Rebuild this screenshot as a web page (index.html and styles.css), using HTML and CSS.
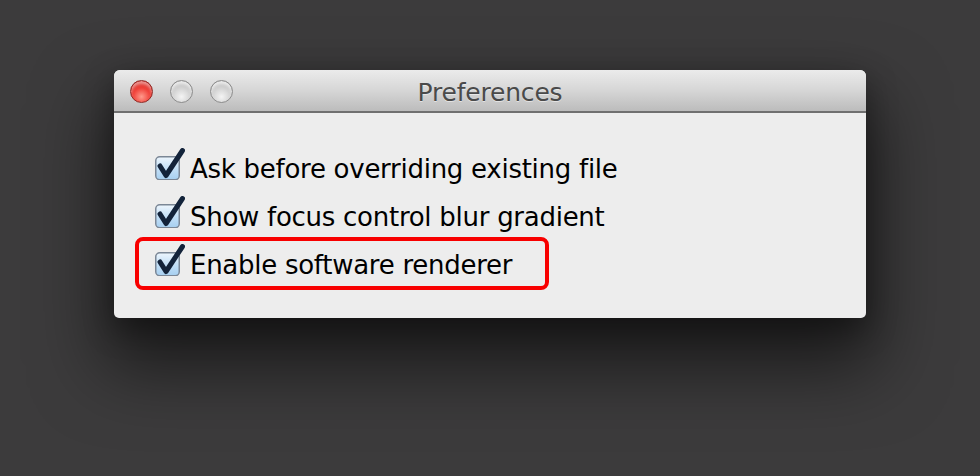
FILE: index.html
```html
<!DOCTYPE html>
<html>
<head>
<meta charset="utf-8">
<link rel="stylesheet" href="styles.css">
</head>
<body>
<div class="desk">
  <div class="window">
    <div class="titlebar">
      <div class="lights">
        <span class="light red"></span>
        <span class="light gray"></span>
        <span class="light gray"></span>
      </div>
      <div class="title">Preferences</div>
    </div>
    <div class="content">
      <div class="row">
        <svg class="cb" width="30" height="32" viewBox="0 0 30 32"><defs><linearGradient id="g1" x1="0" y1="0" x2="0" y2="1"><stop offset="0" stop-color="#eef6fd"/><stop offset="0.5" stop-color="#c4e0f7"/><stop offset="1" stop-color="#a6cff0"/></linearGradient></defs><rect x="0.75" y="8.75" width="23.5" height="23" rx="4" fill="url(#g1)" stroke="#7b8796" stroke-width="1.5"/><path d="M5 18 L11 27.5 L27.5 2.5" fill="none" stroke="#13233a" stroke-width="5" stroke-linecap="round" stroke-linejoin="round"/></svg>
        <span class="label">Ask before overriding existing file</span>
      </div>
      <div class="row">
        <svg class="cb" width="30" height="32" viewBox="0 0 30 32"><rect x="0.75" y="8.75" width="23.5" height="23" rx="4" fill="url(#g1)" stroke="#7b8796" stroke-width="1.5"/><path d="M5 18 L11 27.5 L27.5 2.5" fill="none" stroke="#13233a" stroke-width="5" stroke-linecap="round" stroke-linejoin="round"/></svg>
        <span class="label">Show focus control blur gradient</span>
      </div>
      <div class="row highlighted">
        <svg class="cb" width="30" height="32" viewBox="0 0 30 32"><rect x="0.75" y="8.75" width="23.5" height="23" rx="4" fill="url(#g1)" stroke="#7b8796" stroke-width="1.5"/><path d="M5 18 L11 27.5 L27.5 2.5" fill="none" stroke="#13233a" stroke-width="5" stroke-linecap="round" stroke-linejoin="round"/></svg>
        <span class="label">Enable software renderer</span>
        <span class="mark"></span>
      </div>
    </div>
  </div>
</div>
</body>
</html>
```
FILE: styles.css
```css
html, body {
  margin: 0;
  padding: 0;
  background: #3c3b3c;
}
.desk {
  width: 980px;
  height: 476px;
  padding: 70px 0 0 114px;
  box-sizing: border-box;
  background: #3c3b3c;
}
.window {
  width: 752px;
  height: 248px;
  border-radius: 6px 6px 5px 5px;
  overflow: hidden;
  background: #ededed;
  box-shadow: 0 40px 70px 10px rgba(0,0,0,0.55), 0 10px 30px rgba(0,0,0,0.35);
  font-family: "DejaVu Sans", sans-serif;
}
.titlebar {
  height: 41px;
  border-bottom: 2px solid #707070;
  background: linear-gradient(#ebebeb, #d6d6d6 50%, #bcbcbc);
  display: flex;
  align-items: center;
  position: relative;
}
.lights {
  display: flex;
  gap: 17px;
  padding-left: 16px;
  padding-top: 2px;
}
.light {
  width: 23px;
  height: 23px;
  border-radius: 50%;
  box-sizing: border-box;
}
.red {
  background: radial-gradient(circle at 50% 75%, #ff9a8c 0%, #f0423a 45%, #c41812 100%);
  border: 1px solid #8e2a26;
  box-shadow: inset 0 3px 3px rgba(255,255,255,0.5);
}
.gray {
  background: radial-gradient(circle at 50% 75%, #f4f4f4 0%, #d0d0d0 50%, #a9a9a9 100%);
  border: 1px solid #8c8c8c;
  box-shadow: inset 0 3px 3px rgba(255,255,255,0.7);
}
.title {
  position: absolute;
  left: 0;
  right: 0;
  top: 8px;
  text-align: center;
  font-size: 25px;
  letter-spacing: -0.2px;
  color: #4a4a4a;
  text-shadow: 0 1px 0 rgba(255,255,255,0.5);
}
.content {
  padding: 31px 0 0 41px;
}
.row {
  height: 48px;
  display: flex;
  align-items: center;
  position: relative;
}
.cb {
  flex: none;
  margin-top: -8px;
  margin-right: 5px;
}
.label {
  font-size: 26px;
  letter-spacing: -0.27px;
  color: #000;
  margin-top: 1px;
}
.mark {
  position: absolute;
  left: -20px;
  top: -3px;
  width: 414px;
  height: 53px;
  box-sizing: border-box;
  border: 4px solid #f80000;
  border-radius: 8px;
}
```
